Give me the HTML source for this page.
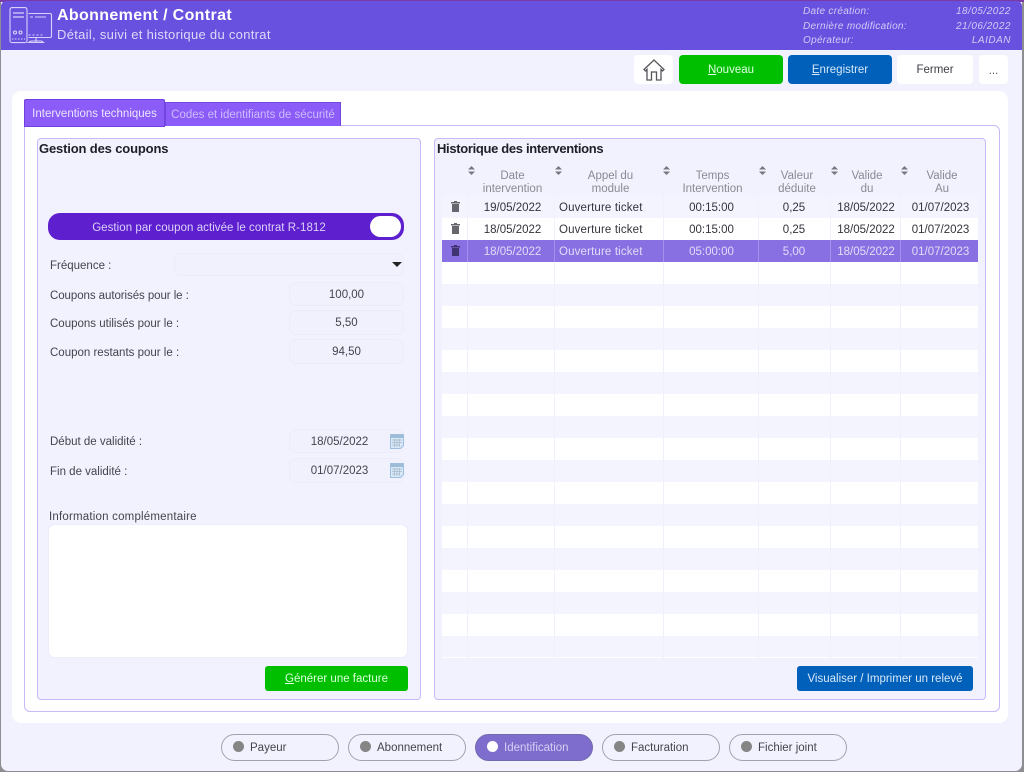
<!DOCTYPE html>
<html lang="fr">
<head>
<meta charset="utf-8">
<title>Abonnement / Contrat</title>
<style>
html,body{margin:0;padding:0;width:1024px;height:772px;overflow:hidden;background:#8a8a8a;}
*{box-sizing:border-box;}
body{font-family:"Liberation Sans",sans-serif;font-size:11.5px;color:#44444c;position:relative;}
.a{position:absolute;}
.t{position:absolute;white-space:nowrap;line-height:14px;margin-top:1px;}
.c{text-align:center;}
.btn{position:absolute;border-radius:4px;text-align:center;font-size:11.5px;}
.in{position:absolute;background:#f1f1fd;border:1px solid #ebebfa;border-radius:7px;text-align:center;line-height:25px;font-size:11.5px;color:#44444c;}
.hd{position:absolute;text-align:center;color:#8a8a92;font-size:11.5px;line-height:13px;}
.sort{position:absolute;width:7px;height:9px;}
.cell{position:absolute;text-align:center;font-size:11.5px;line-height:24px;height:22px;color:#33333b;white-space:nowrap;}
.sel{color:#e2dcf8;}
.nav{position:absolute;top:734px;width:118px;height:27px;border:1px solid #a2a2ac;border-radius:14px;font-size:11.5px;line-height:27px;padding-left:28px;color:#44444c;}
.nav i{position:absolute;left:11px;top:6px;width:11px;height:11px;border-radius:50%;background:#858585;}
.vl{position:absolute;top:196px;height:462px;width:1px;background:#f0f0fb;}
.meta{font-size:10px;font-style:italic;color:#d2ccf4;letter-spacing:.3px;}
.metav{font-size:10px;font-style:italic;color:#d2ccf4;letter-spacing:.5px;}
u{text-underline-offset:1px;}
</style>
</head>
<body>
<div class="a" style="left:0;top:0;width:1024px;height:772px;background:#8e8e92;"></div>
<div class="a" style="left:1px;top:1px;width:1021px;height:770px;background:#f2f2fe;border-radius:0 0 7px 7px;"></div>
<div class="a" style="left:0;top:0;width:1024px;height:2px;background:#7a3aa8;"></div>
<div class="a" style="left:1px;top:1px;width:1021px;height:49px;background:#6951e0;border-radius:5px 5px 0 0;"></div>

<svg class="a" style="left:9px;top:7px;" width="44" height="38" viewBox="0 0 44 38" fill="none" stroke="#d9d2f8" stroke-width="1.100">
<path d="M3 .6h13a2 2 0 0 1 2 2v31a2 2 0 0 1-2 2H3a2 2 0 0 1-2-2v-31a2 2 0 0 1 2-2z"/>
<path d="M4 6h11M4 10h11" stroke-width="1.300"/>
<circle cx="6" cy="25.500" r="1.500"/><circle cx="11.500" cy="25.500" r="1.500"/>
<path d="M3 32h13" stroke-dasharray="1.500 1.500"/>
<path d="M19.500 6.500H41a1.500 1.500 0 0 1 1.500 1.500v21a1.500 1.500 0 0 1-1.500 1.500H19.500"/>
<path d="M21 10h3M26 10h11"/>
<path d="M19.500 28h15" stroke-dasharray="2 2"/>
<path d="M27 31v4M19.500 35.500h15l-2-1.500H22z"/>
</svg>

<div class="t" style="left:57px;top:5px;font-size:16px;line-height:20px;font-weight:bold;color:#fff;letter-spacing:.35px;">Abonnement / Contrat</div>
<div class="t" style="left:57px;top:26px;font-size:13px;line-height:16px;color:#ded9f8;letter-spacing:.3px;">Détail, suivi et historique du contrat</div>

<div class="t meta" style="left:803px;top:4px;">Date création:</div>
<div class="t meta" style="left:803px;top:19px;">Dernière modification:</div>
<div class="t meta" style="left:803px;top:33px;">Opérateur:</div>
<div class="t metav" style="right:13px;top:4px;">18/05/2022</div>
<div class="t metav" style="right:13px;top:19px;">21/06/2022</div>
<div class="t metav" style="right:13px;top:33px;">LAIDAN</div>

<!-- toolbar -->
<div class="btn" style="left:634px;top:55px;width:39px;height:29px;background:#fff;"></div>
<svg class="a" style="left:643px;top:58px;" width="22" height="23" viewBox="0 0 22 23" fill="none" stroke="#55555a" stroke-width="1.300">
<path d="M1 11.500 11 2l10 9.500-1.500 1.500L18 11.500V22h-4.500v-8h-5v8H4V11.500L2.500 13z"/>
</svg>
<div class="btn" style="left:679px;top:55px;width:104px;height:29px;background:#00bf00;color:#dfffdf;line-height:31px;"><u>N</u>ouveau</div>
<div class="btn" style="left:788px;top:55px;width:104px;height:29px;background:#0060ba;color:#d8e8f8;line-height:31px;"><u>E</u>nregistrer</div>
<div class="btn" style="left:897px;top:55px;width:76px;height:29px;background:#fff;color:#3c3c44;line-height:31px;">Fermer</div>
<div class="btn" style="left:979px;top:55px;width:29px;height:29px;background:#fff;color:#55555c;line-height:33px;">...</div>

<!-- main white panel -->
<div class="a" style="left:12px;top:91px;width:996px;height:632px;background:#fff;border-radius:9px;"></div>
<div class="a" style="left:24px;top:125px;width:976px;height:587px;border:1px solid #c9b9f6;border-radius:0 6px 6px 6px;background:#fff;"></div>

<!-- tabs -->
<div class="a" style="left:165px;top:102px;width:176px;height:24px;background:#8b5cf8;border:1px solid #7448e0;border-bottom:0;color:#cdbcfc;text-align:center;line-height:24px;font-size:11.5px;">Codes et identifiants de sécurité</div>
<div class="a" style="left:24px;top:99px;width:141px;height:28px;background:#8b5cf8;border:1px solid #7040e0;border-radius:2px 2px 0 0;color:#ece6ff;text-align:center;line-height:28px;font-size:11.5px;">Interventions techniques</div>

<!-- left group -->
<div class="a" style="left:37px;top:138px;width:384px;height:562px;background:#f2f2fe;border:1px solid #c9b9f8;border-radius:4px;"></div>
<div class="t" style="left:39px;top:141px;font-size:13px;font-weight:bold;color:#1e1e26;letter-spacing:-.15px;">Gestion des coupons</div>

<div class="a" style="left:48px;top:213px;width:356px;height:27px;background:#5e20cf;border-radius:12px;"></div>
<div class="t c" style="left:48px;top:220px;width:322px;color:#ddd2f8;font-size:11.5px;letter-spacing:.05px;">Gestion par coupon activée le contrat R-1812</div>
<div class="a" style="left:370px;top:216px;width:31px;height:21px;background:#fff;border-radius:11px;"></div>

<div class="t" style="left:50px;top:258px;">Fréquence :</div>
<div class="in" style="left:174px;top:253px;width:230px;height:23px;"></div>
<div class="a" style="left:392px;top:262px;width:0;height:0;border-left:5px solid transparent;border-right:5px solid transparent;border-top:5px solid #222;"></div>

<div class="t" style="left:50px;top:288px;letter-spacing:-.07px;">Coupons autorisés pour le :</div>
<div class="in" style="left:289px;top:282px;width:115px;height:24px;">100,00</div>
<div class="t" style="left:50px;top:316px;">Coupons utilisés pour le :</div>
<div class="in" style="left:289px;top:310px;width:115px;height:25px;">5,50</div>
<div class="t" style="left:50px;top:345px;">Coupon restants pour le :</div>
<div class="in" style="left:289px;top:339px;width:115px;height:25px;">94,50</div>

<div class="t" style="left:50px;top:434px;">Début de validité :</div>
<div class="in" style="left:289px;top:429px;width:115px;height:24px;padding-right:14px;">18/05/2022</div>
<div class="t" style="left:50px;top:464px;">Fin de validité :</div>
<div class="in" style="left:289px;top:458px;width:115px;height:25px;padding-right:14px;">01/07/2023</div>

<svg class="a" style="left:390px;top:434px;" width="14" height="15" viewBox="0 0 14 15"><path d="M.5.500h13v11l-3 3H.5z" fill="#d8e8f7" stroke="#9dbfe0"/><rect x=".5" y=".5" width="13" height="3.500" fill="#9dbcd8"/><path d="M2 6h10M2 8.500h10M2 11h8M4.500 5v8M7 5v8M9.500 5v8" stroke="#a5b8cc" stroke-width=".7"/></svg>
<svg class="a" style="left:390px;top:463px;" width="14" height="15" viewBox="0 0 14 15"><path d="M.5.500h13v11l-3 3H.5z" fill="#d8e8f7" stroke="#9dbfe0"/><rect x=".5" y=".5" width="13" height="3.500" fill="#9dbcd8"/><path d="M2 6h10M2 8.500h10M2 11h8M4.500 5v8M7 5v8M9.500 5v8" stroke="#a5b8cc" stroke-width=".7"/></svg>

<div class="t" style="left:49px;top:509px;letter-spacing:.2px;">Information complémentaire</div>
<div class="a" style="left:48px;top:524px;width:360px;height:134px;background:#fff;border:1px solid #ececfa;border-radius:7px;"></div>
<div class="btn" style="left:265px;top:666px;width:143px;height:25px;background:#00bf00;color:#dcffdc;line-height:27px;border-radius:3px;"><u>G</u>énérer une facture</div>

<!-- right group -->
<div class="a" style="left:434px;top:138px;width:552px;height:562px;background:#f2f2fe;border:1px solid #c9b9f8;border-radius:4px;"></div>
<div class="t" style="left:437px;top:141px;font-size:13px;font-weight:bold;color:#1e1e26;letter-spacing:-.33px;">Historique des interventions</div>

<!-- table headers -->
<div class="hd" style="left:469px;top:170px;width:87px;">Date<br>intervention</div>
<div class="hd" style="left:556px;top:170px;width:109px;">Appel du<br>module</div>
<div class="hd" style="left:663px;top:170px;width:99px;">Temps<br>Intervention</div>
<div class="hd" style="left:758px;top:170px;width:78px;">Valeur<br>déduite</div>
<div class="hd" style="left:830px;top:170px;width:74px;">Valide<br>du</div>
<div class="hd" style="left:900px;top:170px;width:84px;">Valide<br>Au</div>

<svg class="sort" style="left:468px;top:166px;" viewBox="0 0 7 9" fill="#77777f"><path d="M3.500 0 7 3.500H0zM0 5.500h7L3.500 9z"/></svg>
<svg class="sort" style="left:555px;top:166px;" viewBox="0 0 7 9" fill="#77777f"><path d="M3.500 0 7 3.500H0zM0 5.500h7L3.500 9z"/></svg>
<svg class="sort" style="left:663px;top:166px;" viewBox="0 0 7 9" fill="#77777f"><path d="M3.500 0 7 3.500H0zM0 5.500h7L3.500 9z"/></svg>
<svg class="sort" style="left:759px;top:166px;" viewBox="0 0 7 9" fill="#77777f"><path d="M3.500 0 7 3.500H0zM0 5.500h7L3.500 9z"/></svg>
<svg class="sort" style="left:831px;top:166px;" viewBox="0 0 7 9" fill="#77777f"><path d="M3.500 0 7 3.500H0zM0 5.500h7L3.500 9z"/></svg>
<svg class="sort" style="left:901px;top:166px;" viewBox="0 0 7 9" fill="#77777f"><path d="M3.500 0 7 3.500H0zM0 5.500h7L3.500 9z"/></svg>

<!-- table body -->
<div class="a" style="left:442px;top:196px;width:536px;height:462px;background:repeating-linear-gradient(to bottom,#f4f4fe 0,#f4f4fe 22px,#fff 22px,#fff 44px);"></div>
<div class="a" style="left:442px;top:657px;width:536px;height:1px;background:#fff;"></div>
<div class="a" style="left:442px;top:240px;width:536px;height:22px;background:#8970e2;"></div>
<div class="vl" style="left:467px;"></div>
<div class="vl" style="left:554px;"></div>
<div class="vl" style="left:663px;"></div>
<div class="vl" style="left:758px;"></div>
<div class="vl" style="left:830px;"></div>
<div class="vl" style="left:900px;"></div>
<div class="a" style="left:467px;top:240px;width:1px;height:22px;background:#a290ea;"></div>
<div class="a" style="left:554px;top:240px;width:1px;height:22px;background:#a290ea;"></div>
<div class="a" style="left:663px;top:240px;width:1px;height:22px;background:#a290ea;"></div>
<div class="a" style="left:758px;top:240px;width:1px;height:22px;background:#a290ea;"></div>
<div class="a" style="left:830px;top:240px;width:1px;height:22px;background:#a290ea;"></div>
<div class="a" style="left:900px;top:240px;width:1px;height:22px;background:#a290ea;"></div>

<svg class="a" style="left:451px;top:201px;" width="9" height="11" viewBox="0 0 9 11" fill="#66666c"><path d="M3 0h3v1h3v1.500H0V1h3zM1 3h7v8H1z"/></svg>
<svg class="a" style="left:451px;top:223px;" width="9" height="11" viewBox="0 0 9 11" fill="#66666c"><path d="M3 0h3v1h3v1.500H0V1h3zM1 3h7v8H1z"/></svg>
<svg class="a" style="left:451px;top:245px;" width="9" height="11" viewBox="0 0 9 11" fill="#3e3570"><path d="M3 0h3v1h3v1.500H0V1h3zM1 3h7v8H1z"/></svg>

<div class="cell" style="left:469px;top:196px;width:87px;">19/05/2022</div>
<div class="cell" style="left:559px;top:196px;letter-spacing:.15px;">Ouverture ticket</div>
<div class="cell" style="left:664px;top:196px;width:95px;">00:15:00</div>
<div class="cell" style="left:758px;top:196px;width:72px;">0,25</div>
<div class="cell" style="left:830px;top:196px;width:72px;">18/05/2022</div>
<div class="cell" style="left:902px;top:196px;width:77px;">01/07/2023</div>

<div class="cell" style="left:469px;top:218px;width:87px;">18/05/2022</div>
<div class="cell" style="left:559px;top:218px;letter-spacing:.15px;">Ouverture ticket</div>
<div class="cell" style="left:664px;top:218px;width:95px;">00:15:00</div>
<div class="cell" style="left:758px;top:218px;width:72px;">0,25</div>
<div class="cell" style="left:830px;top:218px;width:72px;">18/05/2022</div>
<div class="cell" style="left:902px;top:218px;width:77px;">01/07/2023</div>

<div class="cell sel" style="left:469px;top:240px;width:87px;">18/05/2022</div>
<div class="cell sel" style="left:559px;top:240px;letter-spacing:.15px;">Ouverture ticket</div>
<div class="cell sel" style="left:664px;top:240px;width:95px;">05:00:00</div>
<div class="cell sel" style="left:758px;top:240px;width:72px;">5,00</div>
<div class="cell sel" style="left:830px;top:240px;width:72px;">18/05/2022</div>
<div class="cell sel" style="left:902px;top:240px;width:77px;">01/07/2023</div>

<div class="btn" style="left:797px;top:666px;width:176px;height:25px;background:#0060ba;color:#d8e8f8;line-height:27px;border-radius:3px;">Visualiser / Imprimer un relevé</div>

<!-- bottom nav -->
<div class="nav" style="left:221px;">Payeur<i></i></div>
<div class="nav" style="left:348px;">Abonnement<i></i></div>
<div class="nav" style="left:475px;background:#7f6dcd;border-color:#6e6cae;color:#d5cff2;">Identification<i style="background:#fff;"></i></div>
<div class="nav" style="left:602px;">Facturation<i></i></div>
<div class="nav" style="left:729px;">Fichier joint<i></i></div>
</body>
</html>
